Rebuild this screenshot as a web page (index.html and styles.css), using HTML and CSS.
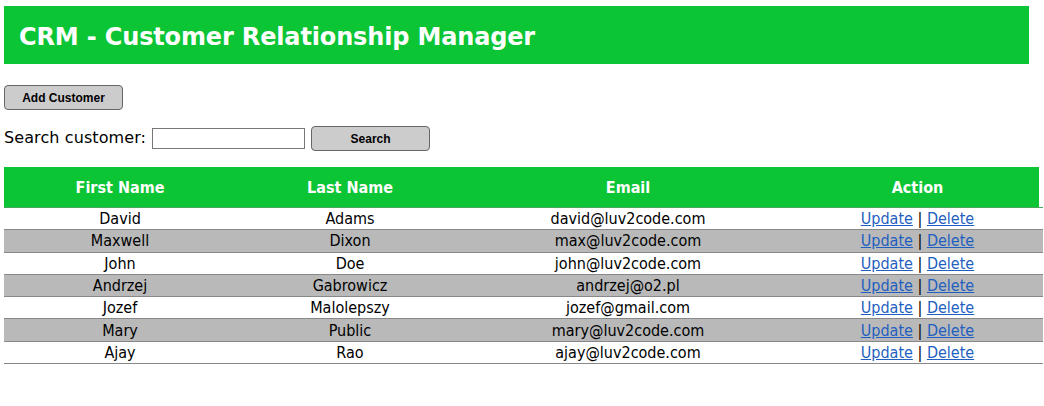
FILE: index.html
```html
<!DOCTYPE html>
<html>
<head>
<meta charset="utf-8">
<title>CRM</title>
<link rel="stylesheet" href="styles.css">
</head>
<body>
<div class="wrapper">
  <div class="header"><h2>CRM - Customer Relationship Manager</h2></div>
</div>
<div class="container">
  <div class="content">
    <button class="add-button">Add Customer</button>
    <form class="search-form">
      <label>Search customer:</label>
      <input type="text" class="search-input">
      <button type="button" class="add-button search-button">Search</button>
    </form>
    <table class="customers">
      <thead>
        <tr><th class="c1">First Name</th><th class="c2">Last Name</th><th class="c3">Email</th><th class="c4">Action</th></tr>
      </thead>
      <tbody>
        <tr><td>David</td><td>Adams</td><td>david@luv2code.com</td><td><a href="#">Update</a> | <a href="#">Delete</a></td></tr>
        <tr><td>Maxwell</td><td>Dixon</td><td>max@luv2code.com</td><td><a href="#">Update</a> | <a href="#">Delete</a></td></tr>
        <tr><td>John</td><td>Doe</td><td>john@luv2code.com</td><td><a href="#">Update</a> | <a href="#">Delete</a></td></tr>
        <tr><td>Andrzej</td><td>Gabrowicz</td><td>andrzej@o2.pl</td><td><a href="#">Update</a> | <a href="#">Delete</a></td></tr>
        <tr><td>Jozef</td><td>Malolepszy</td><td>jozef@gmail.com</td><td><a href="#">Update</a> | <a href="#">Delete</a></td></tr>
        <tr><td>Mary</td><td>Public</td><td>mary@luv2code.com</td><td><a href="#">Update</a> | <a href="#">Delete</a></td></tr>
        <tr><td>Ajay</td><td>Rao</td><td>ajay@luv2code.com</td><td><a href="#">Update</a> | <a href="#">Delete</a></td></tr>
      </tbody>
    </table>
  </div>
</div>
</body>
</html>
```

FILE: styles.css
```css
html, body {
  margin: 0;
  padding: 0;
  background: #fff;
  font-family: "DejaVu Sans Condensed", "DejaVu Sans", sans-serif;
  color: #000;
}
.wrapper {
  padding: 6px 15px 0 4px;
}
.header {
  background: #0bc535;
  height: 58px;
  display: flex;
  align-items: center;
  padding-left: 15px;
}
.header h2 {
  margin: 4px 0 0 0;
  color: #fff;
  font-size: 24px;
  font-weight: bold;
  font-family: "DejaVu Sans", sans-serif;
  letter-spacing: -0.15px;
}
.content {
  padding: 21px 0 0 4px;
}
.add-button {
  display: block;
  width: 119px;
  height: 25px;
  background: #cccccc;
  border: 1px solid #666;
  border-radius: 4px;
  font-family: "Liberation Sans", Arial, sans-serif;
  font-weight: bold;
  font-size: 12px;
  color: #000;
  padding: 0;
}
.search-form {
  display: flex;
  align-items: center;
  margin: 16px 0 0 0;
  height: 25px;
}
.search-form label {
  font-family: "DejaVu Sans", sans-serif;
  font-size: 16px;
  letter-spacing: 0.1px;
  margin-right: 6px;
  position: relative;
  top: -1px;
}
.search-input {
  width: 153px;
  height: 21px;
  box-sizing: border-box;
  border: 1px solid #777;
  padding: 0;
  margin: 0 6px 0 0;
}
.customers {
  margin-top: 16px;
  width: 1039px;
  border-collapse: collapse;
  font-size: 16px;
}
.customers th {
  background: #0bc535;
  color: #fff;
  font-weight: bold;
  height: 40px;
  padding: 0;
  border-bottom: 1px solid #4aa55e;
}
.customers th.c4 {
  box-shadow: inset -4px 0 0 #fff;
}
.customers .c1 { width: 232px; }
.customers .c2 { width: 228px; }
.customers .c3 { width: 328px; }
.customers .c4 { width: 251px; }
.customers td {
  text-align: center;
  padding: 0;
  height: 21.3px;
  border-bottom: 1px solid #888;
}
.customers tbody tr:nth-child(even) td {
  background: #b9b9b9;
}
.customers a {
  color: #1f5fc0;
}
```
